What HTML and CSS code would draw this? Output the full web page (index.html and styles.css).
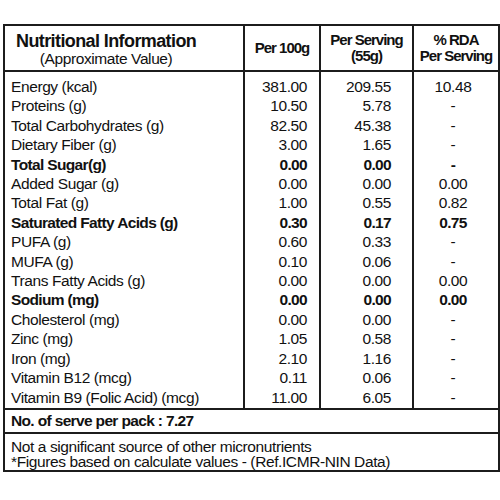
FILE: index.html
```html
<!DOCTYPE html>
<html>
<head>
<meta charset="utf-8">
<link rel="stylesheet" href="styles.css">
</head>
<body>
<table class="nut">
  <colgroup>
    <col class="c1"><col class="c2"><col class="c3"><col class="c4">
  </colgroup>
  <thead>
    <tr>
      <th class="title"><span class="title-box"><span class="title-main">Nutritional Information</span><span class="title-sub">(Approximate Value)</span></span></th>
      <th>Per 100g</th>
      <th>Per Serving<br>(55g)</th>
      <th>% RDA<br>Per Serving</th>
    </tr>
  </thead>
  <tbody class="data">
    <tr><td>Energy (kcal)</td><td>381.00</td><td>209.55</td><td>10.48</td></tr>
    <tr><td>Proteins (g)</td><td>10.50</td><td>5.78</td><td>-</td></tr>
    <tr><td>Total Carbohydrates (g)</td><td>82.50</td><td>45.38</td><td>-</td></tr>
    <tr><td>Dietary Fiber (g)</td><td>3.00</td><td>1.65</td><td>-</td></tr>
    <tr class="b"><td>Total Sugar(g)</td><td>0.00</td><td>0.00</td><td>-</td></tr>
    <tr><td>Added Sugar (g)</td><td>0.00</td><td>0.00</td><td>0.00</td></tr>
    <tr><td>Total Fat (g)</td><td>1.00</td><td>0.55</td><td>0.82</td></tr>
    <tr class="b"><td>Saturated Fatty Acids (g)</td><td>0.30</td><td>0.17</td><td>0.75</td></tr>
    <tr><td>PUFA (g)</td><td>0.60</td><td>0.33</td><td>-</td></tr>
    <tr><td>MUFA (g)</td><td>0.10</td><td>0.06</td><td>-</td></tr>
    <tr><td>Trans Fatty Acids (g)</td><td>0.00</td><td>0.00</td><td>0.00</td></tr>
    <tr class="b"><td>Sodium (mg)</td><td>0.00</td><td>0.00</td><td>0.00</td></tr>
    <tr><td>Cholesterol (mg)</td><td>0.00</td><td>0.00</td><td>-</td></tr>
    <tr><td>Zinc (mg)</td><td>1.05</td><td>0.58</td><td>-</td></tr>
    <tr><td>Iron (mg)</td><td>2.10</td><td>1.16</td><td>-</td></tr>
    <tr><td>Vitamin B12 (mcg)</td><td>0.11</td><td>0.06</td><td>-</td></tr>
    <tr><td>Vitamin B9 (Folic Acid) (mcg)</td><td>11.00</td><td>6.05</td><td>-</td></tr>
  </tbody>
  <tbody class="foot">
    <tr><td colspan="4" class="serve">No. of serve per pack : 7.27</td></tr>
    <tr><td colspan="4" class="notes">Not a significant source of other micronutrients<br>*Figures based on calculate values - (Ref.ICMR-NIN Data)</td></tr>
  </tbody>
</table>
</body>
</html>
```

FILE: styles.css
```css
html, body {
  margin: 0;
  padding: 0;
  background: #fff;
}
body {
  padding: 24px 0 0 3px;
  font-family: "Liberation Sans", Arial, sans-serif;
  color: #111;
}
.nut {
  border-collapse: collapse;
  table-layout: fixed;
  width: 495px;
  border: 2px solid #1c1c1c;
  font-size: 15.5px;
  letter-spacing: -0.4px;
}
.c1 { width: 240px; }
.c2 { width: 76px; }
.c3 { width: 93px; }
.c4 { width: 86px; }

.nut th {
  border: 2px solid #1c1c1c;
  height: 44px;
  padding: 0;
  font-size: 15px;
  font-weight: bold;
  letter-spacing: -1px;
  line-height: 16px;
  text-align: center;
  vertical-align: middle;
  white-space: nowrap;
}
.nut th.title {
  text-align: left;
  padding-left: 11px;
}
.title-box {
  display: inline-flex;
  flex-direction: column;
  align-items: center;
  padding-top: 1px;
}
.title-main {
  font-size: 18px;
  letter-spacing: -0.6px;
  line-height: 20px;
}
.title-sub {
  font-weight: normal;
  font-size: 15.5px;
  letter-spacing: -0.4px;
  line-height: 15px;
}

.data td {
  padding: 0 6px;
  line-height: 19.4px;
  border-left: 2px solid #1c1c1c;
  border-right: 2px solid #1c1c1c;
  white-space: nowrap;
}
.data tr:first-child td { padding-top: 5px; }
.data tr:last-child td { padding-bottom: 1px; }
.data td:nth-child(2) { text-align: right; padding-right: 12px; }
.data td:nth-child(3) { text-align: right; padding-right: 21px; }
.data td:nth-child(4) { text-align: center; padding-right: 12px; }
.data tr.b td { font-weight: bold; letter-spacing: -0.65px; }

.foot td {
  border-top: 2px solid #1c1c1c;
  padding: 0 6px;
}
.serve {
  font-weight: bold;
  letter-spacing: -0.65px;
  height: 22px;
  line-height: 20px;
}
.notes {
  height: 36px;
  line-height: 15.5px;
  padding-bottom: 4px;
  vertical-align: bottom;
}
```
